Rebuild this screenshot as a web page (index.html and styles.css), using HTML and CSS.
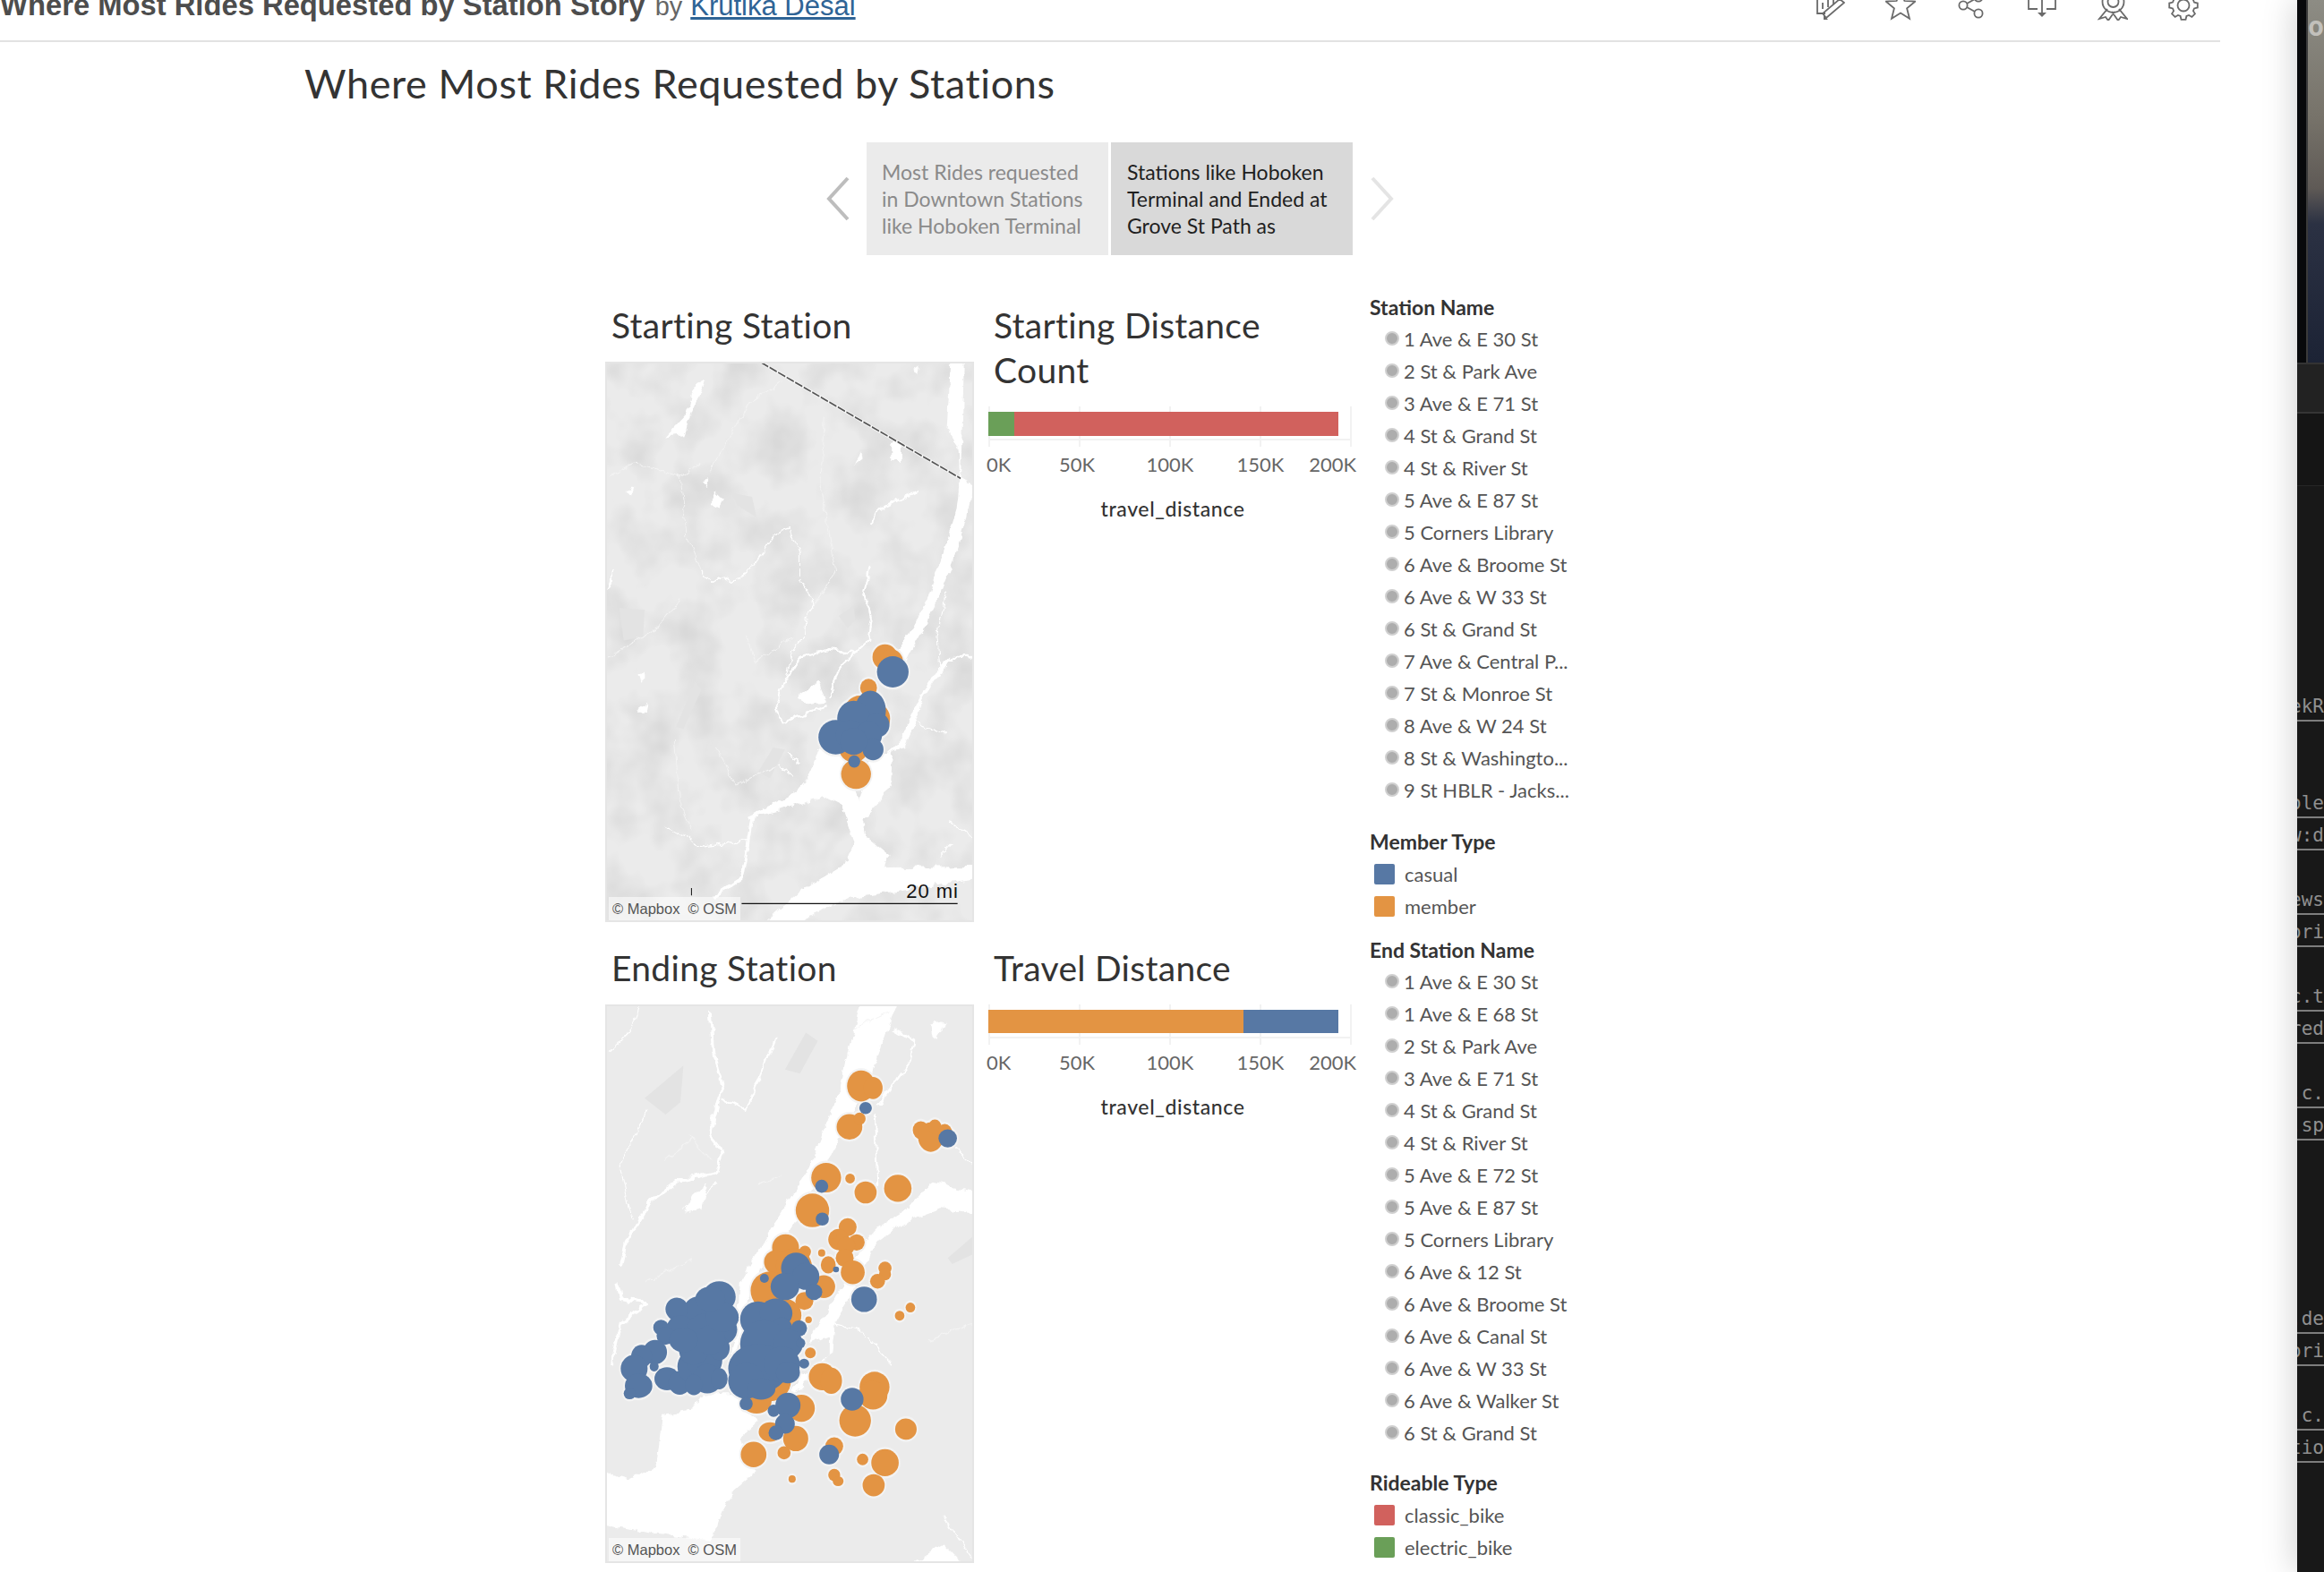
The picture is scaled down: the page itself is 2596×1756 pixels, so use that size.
FILE: index.html
```html
<!DOCTYPE html>
<html lang="en">
<head>
<meta charset="utf-8">
<title>Where Most Rides Requested by Station Story</title>
<link rel="stylesheet" href="styles.css">
</head>
<body>
<div class="screen">
<main class="page">
  <header class="topbar">
    <div class="byline"><strong class="story-name">Where Most Rides Requested by Station Story</strong><span class="by">by</span><a class="author" href="#">Krutika Desai</a></div>
    <div class="tools">
      <svg class="tool" viewBox="0 -11 34 34"><path d="M3 -9V15H12M9 3V10M15 -2V8M21 -2V5"/><path d="M33 3L28 -1L9 15L13 20Z"/><path class="solid" d="M10 17L10 22L15 22Z"/></svg>
      <svg class="tool" viewBox="0 -11 34 34"><path d="M17 -10L21.4 .9L33.2 1.7L24.1 9.3L27 20.8L17 14.5L7 20.8L9.9 9.3L.8 1.7L12.6 .9Z"/></svg>
      <svg class="tool" viewBox="0 -11 34 34"><circle cx="25" cy="15" r="4.6"/><circle cx="8" cy="6" r="4.6"/><circle cx="25" cy="-3" r="4.6"/><path d="M12 4L21 -1M12 8L21 13"/></svg>
      <svg class="tool" viewBox="0 -11 34 34"><path d="M2 -5V10H12M22 10H32V-5M17 -5V15"/><path class="solid" d="M12 14H22L17 19Z"/></svg>
      <svg class="tool" viewBox="0 -11 34 34"><circle cx="17.5" cy="2" r="6"/><circle cx="17.5" cy="2" r="12"/><path d="M11 10L2 21L9 19L12 23L19 13M24 10L33 21L26 19L23 23L16 13"/></svg>
      <svg class="tool" viewBox="0 -11 34 34"><g transform="translate(17 6)"><circle r="6.5"/><path d="M12 -3.4L15.8 -2.5L15.8 2.5L12 3.4L10.9 6.1L12.9 9.4L9.4 12.9L6.1 10.9L3.4 12L2.5 15.8L-2.5 15.8L-3.4 12L-6.1 10.9L-9.4 12.9L-12.9 9.4L-10.9 6.1L-12 3.4L-15.8 2.5L-15.8 -2.5L-12 -3.4L-10.9 -6.1L-12.9 -9.4L-9.4 -12.9L-6.1 -10.9L-3.4 -12L-2.5 -15.8L2.5 -15.8L3.4 -12L6.1 -10.9L9.4 -12.9L12.9 -9.4L10.9 -6.1Z"/></g></svg>
    </div>
  </header>

  <h1 class="story-title">Where Most Rides Requested by Stations</h1>

  <nav class="story-nav">
    <svg class="arrow arrow-prev" viewBox="0 0 26 50"><path d="M24 2L3 25L24 48"/></svg>
    <div class="tab">Most Rides requested<br>in Downtown Stations<br>like Hoboken Terminal</div>
    <div class="tab tab-active">Stations like Hoboken<br>Terminal and Ended at<br>Grove St Path as</div>
    <svg class="arrow arrow-next" viewBox="0 0 26 50"><path d="M2 2L23 25L2 48"/></svg>
  </nav>

  <section class="dashboard">
    <div class="map-col">
      <div class="map-panel map-panel-first">
        <h2 class="sheet-title">Starting Station</h2>
        <div class="map">
          <svg class="map-art" viewBox="48 181 1235 1364" preserveAspectRatio="none">
            <defs>
              <filter id="mottle" x="0" y="0" width="100%" height="100%"><feTurbulence type="fractalNoise" baseFrequency=".007 .009" numOctaves="3" seed="4"/><feColorMatrix values="0 0 0 0 0 0 0 0 0 0 0 0 0 0 0 .16 0 0 0 -.062"/></filter>
              <filter id="wiggle" x="-5%" y="-5%" width="110%" height="110%"><feTurbulence type="fractalNoise" baseFrequency=".03 .04" numOctaves="3" seed="7" result="n"/><feDisplacementMap in="SourceGraphic" in2="n" scale="22" xChannelSelector="R" yChannelSelector="G"/></filter>
              <g id="s-orange">
                <ellipse cx="985" cy="900" rx="42" ry="31"/><ellipse cx="1005" cy="910" rx="40" ry="29"/><ellipse cx="930" cy="975" rx="28" ry="22"/><ellipse cx="888" cy="1185" rx="50" ry="36"/><ellipse cx="900" cy="1030" rx="50" ry="36"/><ellipse cx="960" cy="1050" rx="42" ry="36"/><ellipse cx="880" cy="1120" rx="50" ry="36"/>
              </g>
              <g id="s-blue">
                <ellipse cx="1011" cy="936" rx="53" ry="38"/><ellipse cx="936" cy="1030" rx="52" ry="48"/><ellipse cx="880" cy="1050" rx="55" ry="44"/><ellipse cx="960" cy="1065" rx="40" ry="30"/><ellipse cx="820" cy="1095" rx="58" ry="42"/><ellipse cx="870" cy="1090" rx="50" ry="36"/><ellipse cx="930" cy="1090" rx="45" ry="33"/><ellipse cx="945" cy="1125" rx="35" ry="26"/><ellipse cx="880" cy="1105" rx="45" ry="33"/>
              </g>
            </defs>
            <rect class="land" x="48" y="181" width="1235" height="1364"/>
            <rect x="48" y="181" width="1235" height="1364" filter="url(#mottle)"/>
            <path class="patch" d="M560 1180L610 1120L650 1125L600 1195ZM830 800L880 775L885 810L860 830ZM285 1070L350 960L370 980L310 1075ZM95 780L180 785L175 850L110 860ZM470 500L540 510L555 560L490 530Z"/>
            <g filter="url(#wiggle)">
              <path class="water" d="M1207 170L1250 170L1245 300L1238 465L1278 480L1262 560L1220 650L1170 745L1120 820L1075 880L1050 915L1020 900L1060 850L1120 770L1180 650L1225 540L1236 465L1230 385L1192 340Z"/>
              <path class="water" d="M940 1130L1010 1130L1005 1205L960 1260L910 1300L925 1340L1000 1385L985 1412L1295 1410L1295 1438L1100 1460L850 1490L640 1560L560 1560L700 1470L860 1400L880 1350L840 1262L780 1240L640 1272L530 1292L525 1285L610 1258L680 1232L730 1190L775 1105L830 1130L900 1250Z"/>
              <path class="water" d="M250 365L320 310L350 240L385 225L340 300L310 360ZM405 525L420 498L445 515L425 540ZM1005 380L1040 375L1040 425L1005 425ZM885 430L905 400L910 415ZM375 470L390 455L390 490ZM115 500L145 485L135 510ZM50 740L75 690L75 720ZM160 945L175 935L175 960ZM150 1030L190 1010L185 1030ZM1080 200L1100 190L1095 215ZM690 1000L760 960L790 1010L730 1015Z"/>
              <path class="water" d="M1295 905L1215 900L1160 950L1110 1005L1075 1080L1050 1120L1000 1130L960 1190L985 1135L1040 1100L1085 1020L1150 940L1210 895L1295 895Z"/>
              <g class="rivers">
                <path class="w8" d="M540 1285L525 1360L505 1440L410 1485"/>
                <path class="w5" d="M790 1020L640 1060L620 1020L640 970L700 900L790 880L880 890M935 680L915 740L940 810L930 860L830 930L800 1000M940 575L960 540L1095 495"/>
                <path class="w3" d="M370 690L410 720L440 705L470 720L530 690L570 650L620 600L665 590L700 650L700 710L750 770L720 800L715 850L680 880L650 960M1170 945L1160 850L1190 740M530 1345L370 1360L250 1310M1090 1060L1190 1090M780 1190L830 1225M650 1135L700 1155M630 1165L680 1190M1200 1300L1280 1340M1170 1380L1210 1350"/>
                <path class="faint" d="M780 320L770 480L820 690L750 770M60 460L150 430L300 460L370 430M300 460L320 600L370 690M640 230L520 290L400 450M520 850L550 910L680 850M420 1120L480 1210L620 1170M280 1100L300 1260L340 1320M60 900L220 830L300 760"/>
              </g>
            </g>
            <path class="border-under" d="M570 183L1238 465"/><path class="border-line" d="M570 183L1238 465"/>
            <use class="halo" href="#s-orange"/><use class="halo" href="#s-blue"/>
            <use class="dot-orange" href="#s-orange"/><use class="dot-blue" href="#s-blue"/>
            <ellipse class="dot-blue" cx="882" cy="1154" rx="20" ry="15"/>
            <path class="scale-line" d="M505 1500H1228M337 1462V1480"/>
          </svg>
          <span class="scale-label">20 mi</span>
          <span class="attribution">© Mapbox &nbsp;© OSM</span>
        </div>
      </div>
      <div class="map-panel">
        <h2 class="sheet-title">Ending Station</h2>
        <div class="map map-end">
          <svg class="map-art" viewBox="48 181 1235 1364" preserveAspectRatio="none">
            <defs>
              <g id="e-orange">
                <ellipse cx="905" cy="380" rx="47" ry="38"/><ellipse cx="945" cy="385" rx="32" ry="27"/><ellipse cx="866" cy="480" rx="43" ry="31"/><ellipse cx="900" cy="460" rx="20" ry="15"/><ellipse cx="1105" cy="488" rx="27" ry="22"/><ellipse cx="1138" cy="505" rx="42" ry="36"/><ellipse cx="1152" cy="480" rx="22" ry="18"/><ellipse cx="1185" cy="495" rx="25" ry="22"/>
                <ellipse cx="788" cy="604" rx="50" ry="36"/><ellipse cx="868" cy="606" rx="16" ry="12"/><ellipse cx="920" cy="640" rx="37" ry="27"/><ellipse cx="1028" cy="630" rx="46" ry="33"/><ellipse cx="742" cy="684" rx="56" ry="41"/>
                <ellipse cx="860" cy="725" rx="30" ry="22"/><ellipse cx="890" cy="762" rx="27" ry="20"/><ellipse cx="830" cy="755" rx="35" ry="26"/><ellipse cx="812" cy="745" rx="12" ry="9"/><ellipse cx="855" cy="770" rx="30" ry="22"/><ellipse cx="850" cy="800" rx="30" ry="22"/><ellipse cx="877" cy="835" rx="40" ry="29"/><ellipse cx="795" cy="817" rx="25" ry="21"/><ellipse cx="773" cy="788" rx="12" ry="9"/><ellipse cx="985" cy="825" rx="22" ry="16"/><ellipse cx="985" cy="840" rx="20" ry="15"/><ellipse cx="960" cy="857" rx="25" ry="18"/>
                <ellipse cx="652" cy="775" rx="45" ry="33"/><ellipse cx="620" cy="810" rx="40" ry="29"/><ellipse cx="717" cy="785" rx="20" ry="15"/><ellipse cx="680" cy="820" rx="60" ry="44"/><ellipse cx="780" cy="870" rx="38" ry="28"/><ellipse cx="600" cy="880" rx="65" ry="47"/><ellipse cx="715" cy="905" rx="30" ry="22"/><ellipse cx="650" cy="940" rx="55" ry="40"/><ellipse cx="729" cy="951" rx="11" ry="8"/><ellipse cx="1034" cy="941" rx="16" ry="12"/><ellipse cx="1070" cy="921" rx="16" ry="12"/><ellipse cx="735" cy="1032" rx="18" ry="13"/>
                <ellipse cx="775" cy="1090" rx="45" ry="33"/><ellipse cx="805" cy="1100" rx="36" ry="32"/><ellipse cx="950" cy="1115" rx="50" ry="37"/><ellipse cx="945" cy="1135" rx="48" ry="35"/><ellipse cx="885" cy="1197" rx="53" ry="39"/><ellipse cx="1055" cy="1218" rx="36" ry="26"/>
                <ellipse cx="705" cy="1167" rx="45" ry="33"/><ellipse cx="555" cy="1150" rx="50" ry="30"/><ellipse cx="600" cy="1100" rx="70" ry="50"/><ellipse cx="600" cy="1225" rx="38" ry="24"/><ellipse cx="686" cy="1241" rx="42" ry="31"/><ellipse cx="545" cy="1280" rx="43" ry="31"/><ellipse cx="647" cy="1276" rx="22" ry="16"/><ellipse cx="815" cy="1260" rx="30" ry="22"/><ellipse cx="985" cy="1300" rx="46" ry="33"/><ellipse cx="910" cy="1292" rx="19" ry="14"/><ellipse cx="815" cy="1330" rx="20" ry="15"/><ellipse cx="828" cy="1345" rx="18" ry="12"/><ellipse cx="947" cy="1355" rx="37" ry="27"/><ellipse cx="674" cy="1340" rx="12" ry="9"/>
              </g>
              <g id="e-blue">
                <ellipse cx="920" cy="434" rx="21" ry="15"/><ellipse cx="1195" cy="508" rx="31" ry="22"/><ellipse cx="773" cy="625" rx="22" ry="16"/><ellipse cx="775" cy="705" rx="22" ry="16"/><ellipse cx="581" cy="850" rx="15" ry="11"/><ellipse cx="821" cy="828" rx="10" ry="7"/><ellipse cx="915" cy="901" rx="43" ry="31"/>
                <ellipse cx="687" cy="825" rx="50" ry="38"/><ellipse cx="720" cy="845" rx="45" ry="33"/><ellipse cx="650" cy="870" rx="48" ry="33"/><ellipse cx="747" cy="883" rx="28" ry="20"/>
                <ellipse cx="560" cy="950" rx="60" ry="44"/><ellipse cx="620" cy="935" rx="55" ry="36"/><ellipse cx="640" cy="975" rx="35" ry="30"/><ellipse cx="697" cy="972" rx="27" ry="20"/><ellipse cx="580" cy="1010" rx="80" ry="58"/><ellipse cx="660" cy="1010" rx="50" ry="36"/><ellipse cx="703" cy="1008" rx="15" ry="12"/><ellipse cx="560" cy="1070" rx="100" ry="60"/><ellipse cx="640" cy="1060" rx="60" ry="44"/><ellipse cx="660" cy="1080" rx="40" ry="26"/><ellipse cx="714" cy="1058" rx="17" ry="12"/><ellipse cx="520" cy="1100" rx="60" ry="44"/><ellipse cx="570" cy="1120" rx="48" ry="26"/><ellipse cx="520" cy="1156" rx="22" ry="16"/><ellipse cx="660" cy="1160" rx="42" ry="31"/><ellipse cx="612" cy="1173" rx="20" ry="15"/><ellipse cx="650" cy="1205" rx="33" ry="24"/><ellipse cx="620" cy="1227" rx="25" ry="18"/>
                <ellipse cx="430" cy="895" rx="55" ry="38"/><ellipse cx="465" cy="945" rx="30" ry="25"/><ellipse cx="440" cy="975" rx="50" ry="36"/><ellipse cx="360" cy="930" rx="50" ry="36"/><ellipse cx="288" cy="925" rx="38" ry="28"/><ellipse cx="235" cy="970" rx="26" ry="19"/><ellipse cx="300" cy="970" rx="45" ry="30"/><ellipse cx="380" cy="980" rx="60" ry="44"/><ellipse cx="250" cy="990" rx="30" ry="22"/><ellipse cx="215" cy="1030" rx="40" ry="30"/><ellipse cx="170" cy="1040" rx="35" ry="28"/><ellipse cx="145" cy="1070" rx="45" ry="33"/><ellipse cx="160" cy="1112" rx="46" ry="30"/><ellipse cx="130" cy="1131" rx="20" ry="14"/><ellipse cx="212" cy="1065" rx="15" ry="12"/><ellipse cx="255" cy="1095" rx="42" ry="28"/><ellipse cx="298" cy="1105" rx="38" ry="29"/><ellipse cx="340" cy="1065" rx="50" ry="40"/><ellipse cx="380" cy="1050" rx="60" ry="44"/><ellipse cx="390" cy="1095" rx="50" ry="36"/><ellipse cx="430" cy="1095" rx="28" ry="26"/><ellipse cx="430" cy="1020" rx="35" ry="30"/><ellipse cx="345" cy="1025" rx="50" ry="36"/><ellipse cx="400" cy="1000" rx="50" ry="36"/><ellipse cx="310" cy="1000" rx="48" ry="30"/><ellipse cx="345" cy="1110" rx="30" ry="25"/><ellipse cx="440" cy="945" rx="55" ry="36"/><ellipse cx="400" cy="900" rx="50" ry="30"/>
                <ellipse cx="875" cy="1145" rx="38" ry="28"/><ellipse cx="798" cy="1280" rx="33" ry="24"/>
              </g>
            </defs>
            <rect class="land" x="48" y="181" width="1235" height="1364"/>
            <path class="patch" d="M180 410L310 330L300 420L250 450ZM1195 800L1283 745L1283 790L1210 815ZM450 1215L530 1200L480 1245ZM650 340L720 250L760 270L700 350Z"/>
            <g filter="url(#wiggle)">
              <path class="water" d="M905 170L1030 170L930 370L850 480L780 590L680 720L590 800L540 860L500 1000L460 1100L490 960L500 860L620 710L730 580L830 400Z"/>
              <path class="water" d="M240 1180L340 1170L380 1130L470 1130L560 1200L500 1240L520 1300L560 1320L480 1370L440 1420L400 1490L200 1470L40 1450L40 1320L130 1340L220 1310Z"/>
              <path class="water" d="M1295 640L1140 615L1060 680L960 725L905 770L860 850L770 950L730 1010L800 990L800 1040L760 1060L700 1090L640 1160L690 1130L810 1030L820 960L900 850L960 760L1060 710L1170 680L1295 690Z"/>
              <path class="water" d="M1140 230L1190 220L1150 270ZM1040 1560L1180 1500L1260 1560L1200 1560ZM340 650L390 620L370 680L310 690ZM400 450L420 465L400 480Z"/>
              <g class="rivers">
                <path class="w8" d="M100 820L120 760L200 660L300 610L420 590L440 540L400 500L420 440L440 380L410 300L400 200M70 1060L100 960L190 910L100 900L90 860"/>
                <path class="w5" d="M950 450L960 620M1010 240L1080 270L1070 320L960 430M440 410L520 440L620 260"/>
                <path class="w3" d="M1220 530L1283 570M810 960L900 975L1010 1060M100 570L160 480L190 440M140 710L95 570M60 300L130 250L160 190M310 680L420 620M1180 1430L1283 1540"/>
                <path class="faint" d="M330 500L400 560M250 560L340 510M560 620L640 600M180 860L340 800M880 240L1000 200M1130 1000L1280 960"/>
              </g>
            </g>
            <use class="halo" href="#e-orange"/><use class="halo" href="#e-blue"/>
            <use class="dot-orange" href="#e-orange"/><use class="dot-blue" href="#e-blue"/>
          </svg>
          <span class="attribution">© Mapbox &nbsp;© OSM</span>
        </div>
      </div>
    </div>

    <div class="chart-col">
      <div class="chart-panel chart-panel-first">
        <h2 class="sheet-title chart-title">Starting Distance<br>Count</h2>
        <div class="plot">
          <i class="grid-line"></i><i class="grid-line"></i><i class="grid-line"></i><i class="grid-line"></i><i class="grid-line"></i>
          <div class="stack"><span class="seg seg-green" style="width:29px"></span><span class="seg seg-red" style="width:362px"></span></div>
        </div>
        <div class="ticks"><span>0K</span><span>50K</span><span>100K</span><span>150K</span><span>200K</span></div>
        <div class="axis-name">travel_distance</div>
      </div>
      <div class="chart-panel">
        <h2 class="sheet-title chart-title">Travel Distance</h2>
        <div class="plot">
          <i class="grid-line"></i><i class="grid-line"></i><i class="grid-line"></i><i class="grid-line"></i><i class="grid-line"></i>
          <div class="stack"><span class="seg seg-orange" style="width:285px"></span><span class="seg seg-blue" style="width:106px"></span></div>
        </div>
        <div class="ticks"><span>0K</span><span>50K</span><span>100K</span><span>150K</span><span>200K</span></div>
        <div class="axis-name">travel_distance</div>
      </div>
    </div>

    <aside class="legends">
      <h3 class="legend-title">Station Name</h3>
      <ul class="legend-list">
        <li>1 Ave &amp; E 30 St</li><li>2 St &amp; Park Ave</li><li>3 Ave &amp; E 71 St</li><li>4 St &amp; Grand St</li><li>4 St &amp; River St</li><li>5 Ave &amp; E 87 St</li><li>5 Corners Library</li><li>6 Ave &amp; Broome St</li><li>6 Ave &amp; W 33 St</li><li>6 St &amp; Grand St</li><li>7 Ave &amp; Central P...</li><li>7 St &amp; Monroe St</li><li>8 Ave &amp; W 24 St</li><li>8 St &amp; Washingto...</li><li>9 St HBLR - Jacks...</li>
      </ul>
      <h3 class="legend-title legend-member">Member Type</h3>
      <ul class="swatch-list">
        <li><i class="swatch seg-blue"></i>casual</li><li><i class="swatch seg-orange"></i>member</li>
      </ul>
      <h3 class="legend-title legend-end">End Station Name</h3>
      <ul class="legend-list">
        <li>1 Ave &amp; E 30 St</li><li>1 Ave &amp; E 68 St</li><li>2 St &amp; Park Ave</li><li>3 Ave &amp; E 71 St</li><li>4 St &amp; Grand St</li><li>4 St &amp; River St</li><li>5 Ave &amp; E 72 St</li><li>5 Ave &amp; E 87 St</li><li>5 Corners Library</li><li>6 Ave &amp; 12 St</li><li>6 Ave &amp; Broome St</li><li>6 Ave &amp; Canal St</li><li>6 Ave &amp; W 33 St</li><li>6 Ave &amp; Walker St</li><li>6 St &amp; Grand St</li>
      </ul>
      <h3 class="legend-title legend-ride">Rideable Type</h3>
      <ul class="swatch-list">
        <li><i class="swatch seg-red"></i>classic_bike</li><li><i class="swatch seg-green"></i>electric_bike</li>
      </ul>
    </aside>
  </section>
</main>

<aside class="side-window">
  <div class="side-photo"><span class="side-photo-text">ol</span></div>
  <div class="side-bar"></div>
  <div class="side-bar side-bar-thin"></div>
  <div class="code">
    <div class="code-line">ekR</div>
    <div class="code-gap"></div>
    <div class="code-line">ole</div><div class="code-line">w:d</div>
    <div class="code-gap code-gap-one"></div>
    <div class="code-line">ews</div><div class="code-line">ori</div>
    <div class="code-gap code-gap-one"></div>
    <div class="code-line">c.t</div><div class="code-line">red</div>
    <div class="code-gap code-gap-one"></div>
    <div class="code-line">.c.</div><div class="code-line">.sp</div>
    <div class="code-gap code-gap-five"></div>
    <div class="code-line">.de</div><div class="code-line">ori</div>
    <div class="code-gap code-gap-one"></div>
    <div class="code-line">.c.</div><div class="code-line">tio</div>
  </div>
</aside>
</div>
</body>
</html>
```
FILE: styles.css
```css
* { box-sizing: border-box; }
html, body { margin: 0; padding: 0; background: #fff; }
body { font-family: Lato, "Open Sans", sans-serif; color: #333; }
h1, h2, h3, ul { margin: 0; padding: 0; font-weight: normal; list-style: none; }

.screen { display: flex; width: 2596px; height: 1756px; overflow: hidden; }
.page { width: 2566px; flex: none; }

/* top bar */
.topbar { display: flex; justify-content: space-between; width: 2480px; height: 47px; padding-right: 24px; border-bottom: 2px solid #e2e2e2; overflow: hidden; }
.byline { display: flex; align-items: baseline; margin-top: -14px; height: 40px; line-height: 40px; white-space: nowrap; font-family: "Liberation Sans", Arial, sans-serif; }
.story-name { font-size: 32.75px; color: #4d4d4d; font-weight: 700; }
.by { margin-left: 11px; font-size: 29px; color: #666; }
.author { margin-left: 9px; font-size: 31px; color: #2f6496; }
.tools { display: flex; gap: 45px; margin-top: -11px; }
.tool { width: 34px; height: 34px; fill: none; stroke: #6a6a6a; stroke-width: 1.8; }
.tool .solid { fill: #6a6a6a; stroke: none; }

/* story header */
.story-title { margin: 18px 0 0 340px; font-size: 45px; line-height: 56px; color: #333; letter-spacing: .6px; }
.story-nav { display: flex; align-items: center; gap: 3px; margin: 38px 0 0 923px; height: 126px; }
.arrow { width: 26px; height: 50px; fill: none; stroke-width: 4; flex: none; }
.arrow-prev { stroke: #bdbdbd; margin-right: 16px; }
.arrow-next { stroke: #e4e4e4; margin-left: 17px; }
.tab { width: 270px; height: 126px; padding: 18px 0 0 17px; background: #ebebeb; color: #8a8a8a; font-size: 23px; line-height: 30px; }
.tab-active { background: #d9d9d9; color: #1f1f1f; padding-left: 18px; }

/* dashboard */
.dashboard { display: grid; grid-template-columns: 412px 410px 300px; column-gap: 16px; margin: 40px 0 0 676px; }
.sheet-title { font-size: 39px; line-height: 56px; letter-spacing: .3px; color: #333; padding-left: 7px; white-space: nowrap; }
.map-panel-first { padding-top: 10px; margin-bottom: 23px; }
.map { position: relative; width: 412px; height: 626px; margin-top: 13px; }
.map-end { height: 624px; margin-top: 13px; }
.map-art { display: block; width: 100%; height: 100%; outline: 2px solid #e5e5e5; outline-offset: -2px; }
.land { fill: #ebebeb; }
.water { fill: #fff; }
.rivers path { fill: none; stroke: #fff; stroke-linejoin: round; }
.rivers .w8 { stroke-width: 9; }
.rivers .w5 { stroke-width: 6; }
.rivers .w3 { stroke-width: 3; }
.rivers .faint { stroke: #f4f4f4; stroke-width: 2.5; }
.patch { fill: #e3e3e3; }
.border-under { fill: none; stroke: #f7f7f7; stroke-width: 8; }
.border-line { fill: none; stroke: #555; stroke-width: 4; stroke-dasharray: 26 5; }
.halo { fill: #f3f3f3; stroke: #f3f3f3; stroke-width: 11; }
.dot-orange { fill: #e39443; }
.dot-blue { fill: #5778a4; }
.scale-line { fill: none; stroke: #111; stroke-width: 3; }
.scale-label { position: absolute; right: 17px; bottom: 22px; font: 22px/24px "Liberation Sans", Arial, sans-serif; letter-spacing: 1px; color: #111; }
.attribution { position: absolute; left: 4px; bottom: 2px; height: 26px; padding: 0 4px; background: rgba(255,255,255,.55); font: 16.5px/26px "Liberation Sans", Arial, sans-serif; color: #555; white-space: nowrap; }

/* bar charts */
.chart-panel-first { height: 728px; padding-top: 13px; }
.chart-title { padding-left: 6px; line-height: 50px; }
.chart-panel:not(.chart-panel-first) .chart-title { line-height: 56px; }
.chart-title { margin-bottom: 16px; }
.chart-panel:not(.chart-panel-first) .chart-title { margin-bottom: 13px; }
.plot { position: relative; display: flex; justify-content: space-between; width: 406px; height: 45px; }
.plot::after { content: ""; position: absolute; left: 0; right: 0; bottom: 7px; height: 2px; background: #f2f2f2; }
.grid-line { width: 2px; height: 100%; background: #f2f2f2; }
.stack { position: absolute; left: 0; top: 6px; height: 27px; display: flex; z-index: 1; }
.chart-panel:not(.chart-panel-first) .stack { height: 26px; }
.seg { display: block; height: 100%; }
.seg-green { background: #6a9f58; }
.seg-red { background: #d1615d; }
.seg-orange { background: #e39443; }
.seg-blue { background: #5778a4; }
.ticks { display: grid; grid-template-columns: 51px 100px 108px 94px 60px; width: 413px; margin: 2px 0 0 -2px; font-size: 22px; line-height: 36px; color: #666; text-align: center; }
.ticks span:first-child { text-align: left; }
.ticks span:last-child { text-align: right; }
.axis-name { width: 412px; margin-top: 13px; font-size: 23px; line-height: 36px; letter-spacing: .6px; font-weight: 500; color: #333; text-align: center; }

/* legends */
.legends { font-size: 22px; }
.legend-title { height: 35px; font-size: 23px; line-height: 36px; font-weight: 700; color: #333; white-space: nowrap; }
.legend-member { margin-top: 22px; height: 36px; }
.legend-end { margin-top: 13px; }
.legend-ride { margin-top: 20px; height: 36px; }
.legend-list li, .swatch-list li { display: flex; align-items: center; height: 36px; color: #555; white-space: nowrap; }
.legend-list li { padding-left: 17px; }
.legend-list li::before { content: ""; width: 12px; height: 12px; margin-right: 5px; border-radius: 50%; background: #adadad; border: 2px solid #d0d0d0; flex: none; }
.swatch-list li { padding-left: 5px; }
.swatch { display: block; width: 23px; height: 23px; margin-right: 11px; border-radius: 2px; flex: none; }

/* neighbouring window */
.side-window { position: relative; z-index: 2; width: 30px; flex: none; background: #181818; box-shadow: 0 0 38px rgba(0,0,0,.22); overflow: hidden; font-family: "DejaVu Sans Mono", "Liberation Mono", monospace; }
.side-photo { height: 405px; border-left: 10px solid #08090b; padding-left: 2px; background: linear-gradient(#8d8c84 0, #77736a 130px, #5f5a56 210px, #2b3143 250px, #1c2335 405px); box-shadow: inset 12px 0 0 -10px #3a3a3a; }
.side-photo-text { display: block; padding-top: 12px; font-size: 30px; line-height: 36px; font-weight: 700; color: #c2c0bb; white-space: nowrap; }
.side-bar { height: 57px; background: #222; border-top: 2px solid #333; border-bottom: 2px solid #353535; }
.side-bar-thin { height: 81px; background: #151515; border-top: 0; border-bottom: 1px solid #262626; }
.code { padding-top: 228px; font-size: 21px; color: #8f8f8f; }
.code-line { height: 36px; line-height: 36px; margin-left: -8px; white-space: nowrap; background: linear-gradient(#7d7d7d, #7d7d7d) 8px 33px / 100% 2px no-repeat; }
.code-gap { height: 72px; }
.code-gap-one { height: 36px; }
.code-gap-five { height: 180px; }
```
